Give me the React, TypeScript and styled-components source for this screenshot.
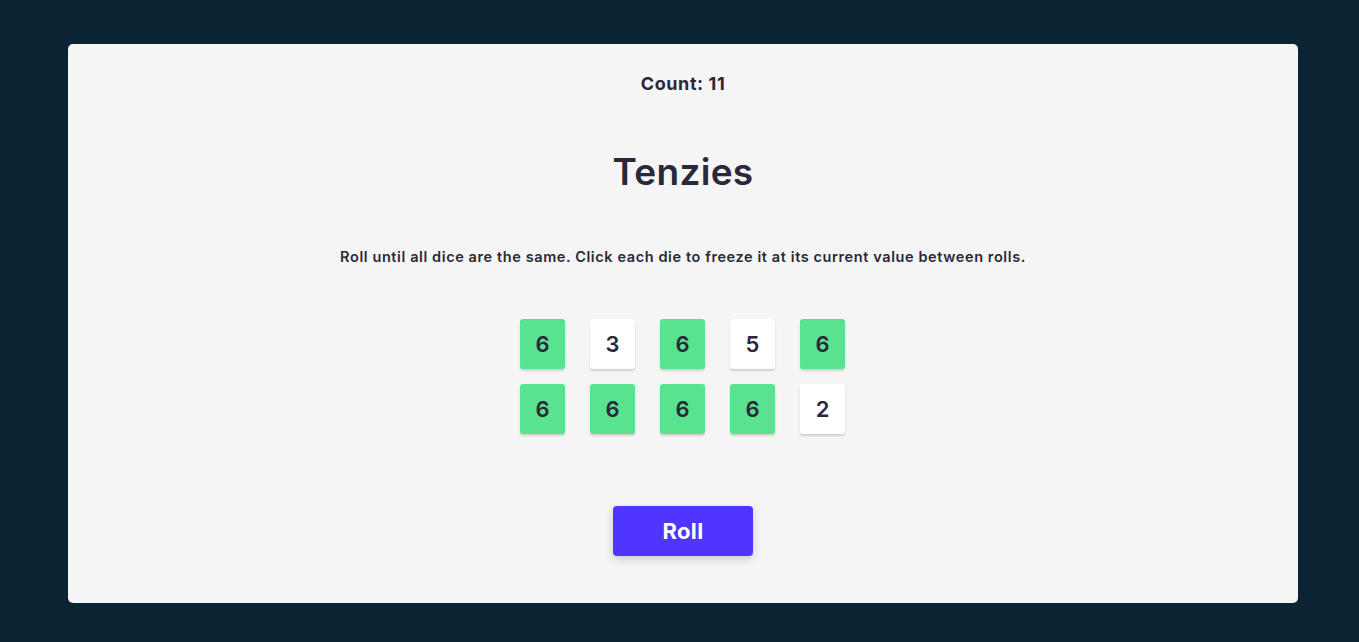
import React from "react";
import styled, { createGlobalStyle } from "styled-components";

const GlobalStyle = createGlobalStyle`
  html, body { margin: 0; padding: 0; background: #0B2434; }
  body { font-family: Inter, "Liberation Sans", sans-serif; color: #2B283A; }
  * { box-sizing: border-box; }
`;

const Main = styled.main`
  margin: 44px 61px 39px 68px;
  height: 559px;
  background: #F5F5F5;
  border-radius: 5px;
  display: flex;
  flex-direction: column;
  align-items: center;
`;

const Count = styled.div`
  margin-top: 29px;
  height: 22px;
  line-height: 22px;
  font-size: 18px;
  font-weight: 700;
  letter-spacing: 0.6px;
`;

const Title = styled.h1`
  margin: 54px 0 0;
  height: 46px;
  line-height: 46px;
  font-size: 37px;
  font-weight: 600;
  letter-spacing: 0.3px;
`;

const Instructions = styled.p`
  margin: 52px 0 0;
  height: 20px;
  line-height: 20px;
  font-size: 14.5px;
  font-weight: 600;
  letter-spacing: 0.6px;
  text-align: center;
`;

const DiceGrid = styled.div`
  margin-top: 52px;
  margin-right: 1px;
  display: grid;
  grid-template-columns: repeat(5, 45px);
  grid-auto-rows: 50px;
  column-gap: 25px;
  row-gap: 15px;
`;

const Die = styled.button<{ $held: boolean }>`
  border: none;
  padding: 0;
  border-radius: 3px;
  background: ${(p) => (p.$held ? "#59E391" : "#FFFFFF")};
  box-shadow: 0 2px 2px rgba(0, 0, 0, 0.15);
  display: flex;
  align-items: center;
  justify-content: center;
  font-family: Inter, "Liberation Sans", sans-serif;
  font-size: 22px;
  font-weight: 600;
  color: #2B283A;
  cursor: pointer;
`;

const RollButton = styled.button`
  margin-top: 72px;
  width: 140px;
  height: 50px;
  border: none;
  border-radius: 4px;
  background: #5035FF;
  color: #FFFFFF;
  font-family: Inter, "Liberation Sans", sans-serif;
  font-size: 22px;
  font-weight: 700;
  letter-spacing: 0.3px;
  box-shadow: 0 3px 8px rgba(0, 0, 0, 0.18);
  cursor: pointer;
`;

const dice = [
  { v: 6, h: true },
  { v: 3, h: false },
  { v: 6, h: true },
  { v: 5, h: false },
  { v: 6, h: true },
  { v: 6, h: true },
  { v: 6, h: true },
  { v: 6, h: true },
  { v: 6, h: true },
  { v: 2, h: false },
];

export default function App() {
  return (
    <>
      <GlobalStyle />
      <Main>
        <Count>Count: 11</Count>
        <Title>Tenzies</Title>
        <Instructions>
          Roll until all dice are the same. Click each die to freeze it at its current value between rolls.
        </Instructions>
        <DiceGrid>
          {dice.map((d, i) => (
            <Die key={i} $held={d.h}>
              {d.v}
            </Die>
          ))}
        </DiceGrid>
        <RollButton>Roll</RollButton>
      </Main>
    </>
  );
}
